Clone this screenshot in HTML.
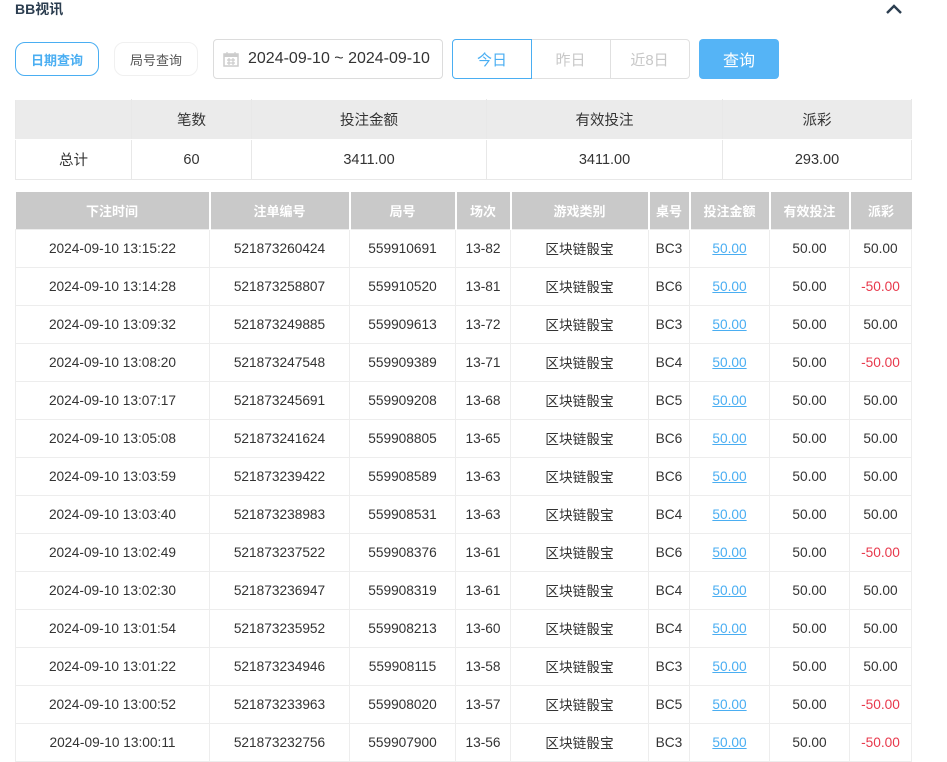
<!DOCTYPE html>
<html><head><meta charset="utf-8">
<style>
*{box-sizing:border-box;margin:0;padding:0}
body{width:947px;height:753px;overflow:hidden;background:#fff;font-family:"Liberation Sans","Noto Sans CJK SC",sans-serif;color:#333;position:relative}
.abs{position:absolute}
.title{left:15px;top:0;font-size:14px;font-weight:bold;color:#2c3e50;line-height:18px}
.btn{border-radius:10px;display:flex;align-items:center;justify-content:center;font-size:13px}
.seg{display:flex;align-items:center;justify-content:center;font-size:15px;color:#c8c8c8;height:40px;top:39px;border:1px solid #e0e0e0}
table{border-collapse:collapse;table-layout:fixed;position:absolute;left:15px}
td,th{text-align:center;font-size:13.7px}
.sum td{border:1px solid #e8e8e8;height:40px;font-size:14.5px}
.sum tr:first-child td{background:#ebebeb;border-color:#fff #e8e8e8}
.det th{background:#c9c9c9;color:#fff;font-weight:bold;height:37px;border-left:2px solid #fff;font-size:13px}
.det th:first-child{border-left:none}
.det td{height:38px;border:1px solid #ededed}
.lnk{color:#4aaef2;text-decoration:underline}
.neg{color:#e8394c}
</style></head><body>
<div class="abs title">BB视讯</div>
<svg class="abs" style="left:885px;top:3px" width="18" height="12" viewBox="0 0 18 12"><path d="M2 10 L9 3 L16 10" fill="none" stroke="#2c3e50" stroke-width="2.4"/></svg>

<div class="abs btn" style="left:15px;top:42px;width:84px;height:34px;border:1px solid #4aaef2;color:#4aaef2;font-weight:bold">日期查询</div>
<div class="abs btn" style="left:114px;top:42px;width:84px;height:34px;border:1px solid #f0f0f0;color:#555">局号查询</div>
<div class="abs" style="left:213px;top:39px;width:230px;height:40px;border:1px solid #dcdcdc;border-radius:4px;display:flex;align-items:center;padding-left:9px;font-size:16px;color:#333;white-space:nowrap">
<svg width="16" height="16" viewBox="0 0 16 16" style="margin-right:9px;flex:none"><rect x="1" y="3" width="14" height="12" fill="none" stroke="#ccc" stroke-width="1.5"/><rect x="1" y="3" width="14" height="3" fill="#ccc"/><path d="M4 1v4M12 1v4M4 9h8M4 12h8M6 7v7M10 7v7" stroke="#ccc" stroke-width="1.2"/></svg>
2024-09-10 ~ 2024-09-10</div>
<div class="abs seg" style="left:452px;width:80px;border-color:#4aaef2;color:#4aaef2;border-radius:4px 0 0 4px;z-index:2">今日</div>
<div class="abs seg" style="left:531px;width:80px;border-left:none">昨日</div>
<div class="abs seg" style="left:610px;width:80px;border-left:none;border-radius:0 4px 4px 0">近8日</div>
<div class="abs" style="left:699px;top:39px;width:80px;height:40px;background:#55b4f6;border-radius:4px;color:#fff;font-size:16px;display:flex;align-items:center;justify-content:center">查询</div>

<table class="sum" style="top:99px;width:896px">
<colgroup><col style="width:116px"><col style="width:120px"><col style="width:235px"><col style="width:236px"><col style="width:189px"></colgroup>
<tr><td></td><td>笔数</td><td>投注金额</td><td>有效投注</td><td>派彩</td></tr>
<tr><td>总计</td><td>60</td><td>3411.00</td><td>3411.00</td><td>293.00</td></tr>
</table>

<table class="det" style="top:192px;width:896px">
<colgroup><col style="width:194px"><col style="width:140px"><col style="width:106px"><col style="width:55px"><col style="width:138px"><col style="width:41px"><col style="width:80px"><col style="width:80px"><col style="width:62px"></colgroup>
<tr><th>下注时间</th><th>注单编号</th><th>局号</th><th>场次</th><th>游戏类别</th><th>桌号</th><th>投注金额</th><th>有效投注</th><th>派彩</th></tr>
<tr><td>2024-09-10 13:15:22</td><td>521873260424</td><td>559910691</td><td>13-82</td><td>区块链骰宝</td><td>BC3</td><td class="lnk">50.00</td><td>50.00</td><td>50.00</td></tr>
<tr><td>2024-09-10 13:14:28</td><td>521873258807</td><td>559910520</td><td>13-81</td><td>区块链骰宝</td><td>BC6</td><td class="lnk">50.00</td><td>50.00</td><td class="neg">-50.00</td></tr>
<tr><td>2024-09-10 13:09:32</td><td>521873249885</td><td>559909613</td><td>13-72</td><td>区块链骰宝</td><td>BC3</td><td class="lnk">50.00</td><td>50.00</td><td>50.00</td></tr>
<tr><td>2024-09-10 13:08:20</td><td>521873247548</td><td>559909389</td><td>13-71</td><td>区块链骰宝</td><td>BC4</td><td class="lnk">50.00</td><td>50.00</td><td class="neg">-50.00</td></tr>
<tr><td>2024-09-10 13:07:17</td><td>521873245691</td><td>559909208</td><td>13-68</td><td>区块链骰宝</td><td>BC5</td><td class="lnk">50.00</td><td>50.00</td><td>50.00</td></tr>
<tr><td>2024-09-10 13:05:08</td><td>521873241624</td><td>559908805</td><td>13-65</td><td>区块链骰宝</td><td>BC6</td><td class="lnk">50.00</td><td>50.00</td><td>50.00</td></tr>
<tr><td>2024-09-10 13:03:59</td><td>521873239422</td><td>559908589</td><td>13-63</td><td>区块链骰宝</td><td>BC6</td><td class="lnk">50.00</td><td>50.00</td><td>50.00</td></tr>
<tr><td>2024-09-10 13:03:40</td><td>521873238983</td><td>559908531</td><td>13-63</td><td>区块链骰宝</td><td>BC4</td><td class="lnk">50.00</td><td>50.00</td><td>50.00</td></tr>
<tr><td>2024-09-10 13:02:49</td><td>521873237522</td><td>559908376</td><td>13-61</td><td>区块链骰宝</td><td>BC6</td><td class="lnk">50.00</td><td>50.00</td><td class="neg">-50.00</td></tr>
<tr><td>2024-09-10 13:02:30</td><td>521873236947</td><td>559908319</td><td>13-61</td><td>区块链骰宝</td><td>BC4</td><td class="lnk">50.00</td><td>50.00</td><td>50.00</td></tr>
<tr><td>2024-09-10 13:01:54</td><td>521873235952</td><td>559908213</td><td>13-60</td><td>区块链骰宝</td><td>BC4</td><td class="lnk">50.00</td><td>50.00</td><td>50.00</td></tr>
<tr><td>2024-09-10 13:01:22</td><td>521873234946</td><td>559908115</td><td>13-58</td><td>区块链骰宝</td><td>BC3</td><td class="lnk">50.00</td><td>50.00</td><td>50.00</td></tr>
<tr><td>2024-09-10 13:00:52</td><td>521873233963</td><td>559908020</td><td>13-57</td><td>区块链骰宝</td><td>BC5</td><td class="lnk">50.00</td><td>50.00</td><td class="neg">-50.00</td></tr>
<tr><td>2024-09-10 13:00:11</td><td>521873232756</td><td>559907900</td><td>13-56</td><td>区块链骰宝</td><td>BC3</td><td class="lnk">50.00</td><td>50.00</td><td class="neg">-50.00</td></tr>
</table>
</body></html>
